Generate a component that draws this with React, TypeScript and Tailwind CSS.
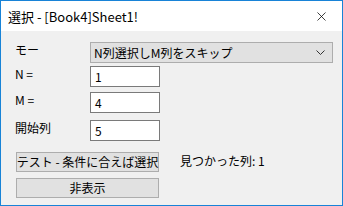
import { X } from "lucide-react"

const font = { fontFamily: '"Noto Sans CJK JP", "Noto Sans", sans-serif' }

function Field({ label, value, top }: { label: string; value: string; top: string }) {
  return (
    <div className={`flex ${top}`}>
      <div className="w-[75px] pt-[2px] text-[12px] text-black">{label}</div>
      <div className="w-[70px] h-[21px] bg-white border border-[#7a7a7a] flex items-center px-[4px] text-[12px] text-black">
        {value}
      </div>
    </div>
  )
}

export default function App() {
  return (
    <div
      className="w-[343px] h-[206px] border border-[#1883d7] bg-[#f0f0f0] flex flex-col overflow-hidden leading-none"
      style={font}
    >
      {/* Title bar */}
      <div className="h-[30px] bg-white flex items-center justify-between pl-[7px] pr-[13px] shrink-0">
        <span className="text-[13px] text-black">選択 - [Book4]Sheet1!</span>
        <X className="w-[15px] h-[15px] text-black" strokeWidth={1.2} />
      </div>

      {/* Body */}
      <div className="flex flex-col pl-[14px] pr-[9px]">
        <div className="flex mt-[11px]">
          <div className="w-[75px] pt-[2px] text-[12px] text-black">モー</div>
          <div className="flex-1 h-[21px] bg-[#e1e1e1] border border-[#adadad] flex items-center justify-between pl-[3px] pr-[7px] text-[12px] text-black">
            <span>N列選択しM列をスキップ</span>
            <svg width="9" height="6" viewBox="0 0 9 6" fill="none">
              <path d="M0.5 0.5 L4.5 4.5 L8.5 0.5" stroke="#333" strokeWidth="1" />
            </svg>
          </div>
        </div>
        <Field label="N =" value="1" top="mt-[3px]" />
        <Field label="M =" value="4" top="mt-[5px]" />
        <Field label="開始列" value="5" top="mt-[7px]" />

        <div className="flex items-start mt-[11px]">
          <div className="ml-[1px] w-[143px] h-[20px] bg-[#e1e1e1] border border-[#adadad] flex items-center justify-center text-[12px] text-black whitespace-nowrap">
            テスト - 条件に合えば選択
          </div>
          <span className="ml-[21px] pt-[3px] text-[12px] text-black">見つかった列: 1</span>
        </div>
        <div className="ml-[1px] w-[143px] h-[20px] mt-[6px] bg-[#e1e1e1] border border-[#adadad] flex items-center justify-center text-[12px] text-black">
          非表示
        </div>
      </div>
    </div>
  )
}
